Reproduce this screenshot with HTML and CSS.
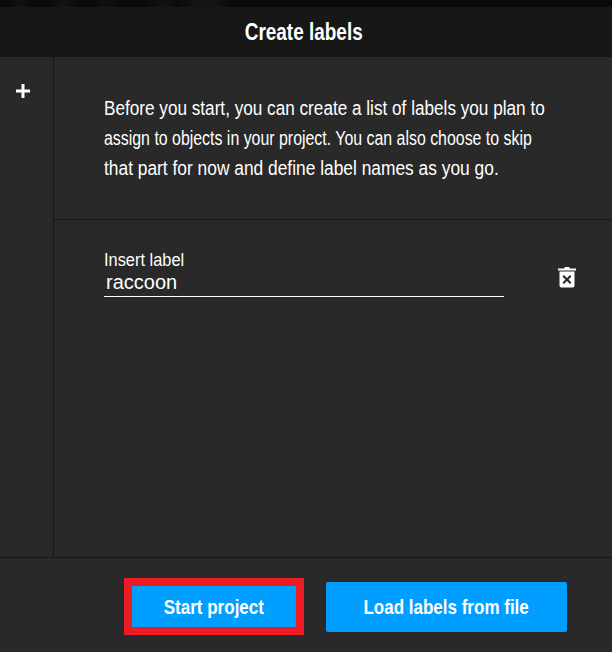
FILE: index.html
```html
<!DOCTYPE html>
<html lang="en">
<head>
<meta charset="utf-8">
<title>Create labels</title>
<link rel="stylesheet" href="styles.css">
</head>
<body>
<div class="app">
  <div class="backdrop"></div>
  <header class="title-bar"><h1 class="title">Create labels</h1></header>
  <div class="main">
    <aside class="sidebar">
      <svg class="plus" width="16" height="16" viewBox="0 0 16 16"><path d="M6.500 1h3v5.500h5.500v3h-5.500v5.500h-3v-5.500h-5.500v-3h5.500z" fill="#fff"/></svg>
    </aside>
    <div class="content">
      <section class="intro">
        <p class="intro-text"><span class="line line-1">Before you start, you can create a list of labels you plan to</span> <span class="line line-2">assign to objects in your project. You can also choose to skip</span> <span class="line line-3">that part for now and define label names as you go.</span></p>
      </section>
      <section class="labels">
        <div class="label-row">
          <div class="field">
            <label class="field-label">Insert label</label>
            <div class="field-value">raccoon</div>
          </div>
          <svg class="trash" width="18" height="22" viewBox="0 0 18 22"><path d="M0 2.500h6l1-1.500h4l1 1.500h6v2h-18z" fill="#fff"/><path fill-rule="evenodd" fill="#fff" d="M1.500 5.500h15v14a2 2 0 0 1-2 2h-11a2 2 0 0 1-2-2zM6 9l-1.500 1.500 3 3-3 3 1.500 1.500 3-3 3 3 1.500-1.500-3-3 3-3-1.500-1.500-3 3z"/></svg>
        </div>
      </section>
    </div>
  </div>
  <footer class="footer">
    <div class="highlight"><button class="btn btn-start"><span class="btn-text">Start project</span></button></div>
    <button class="btn btn-load"><span class="btn-text">Load labels from file</span></button>
  </footer>
</div>
</body>
</html>
```
FILE: styles.css
```css
* { box-sizing: border-box; }
html, body { margin: 0; padding: 0; }
body { background: #292929; color: #fff; font-family: "Liberation Sans", sans-serif; }
.app { width: 612px; height: 652px; display: flex; flex-direction: column; overflow: hidden; }
.backdrop { height: 7px; background: linear-gradient(90deg, #0a0a0a 4%, #121212 8%, #0b0b0b 12%, #0a0a0a 19%, #131313 24%, #0b0b0b 30%, #0a0a0a 35%, #111 41%, #0b0b0b 45%, #0a0a0a 56%, #131313 64%, #0b0b0b 68%, #131313 75%, #151515 82%, #0b0b0b 88%, #0a0a0a 91%) 0 0 / 260px 100% no-repeat #0a0a0a; }
.title-bar { height: 50px; background: #171717; display: flex; align-items: center; justify-content: center; padding-right: 5px; }
.title { margin: 0; font-size: 24px; font-weight: 700; line-height: 50px; transform: scaleX(.79); }
.main { height: 500px; display: flex; }
.sidebar { width: 54px; border-right: 1px solid #171717; display: flex; justify-content: center; padding-top: 26px; padding-right: 8px; }
.plus { display: block; }
.content { flex: 1; display: flex; flex-direction: column; min-width: 0; }
.intro { height: 163px; border-bottom: 1px solid #171717; padding: 36px 0 0 50px; overflow: hidden; }
.intro-text { margin: 0; font-size: 20px; line-height: 30px; }
.line { display: block; width: max-content; white-space: nowrap; transform-origin: left center; }
.line-1 { transform: scaleX(.858); }
.line-2 { transform: scaleX(.795); }
.line-3 { transform: scaleX(.868); }
.labels { padding: 30px 36px 0 50px; }
.label-row { display: flex; align-items: center; justify-content: space-between; }
.field { width: 400px; border-bottom: 1px solid #fff; height: 47px; }
.field-label { display: block; font-size: 18px; line-height: 20px; transform: scaleX(.91); transform-origin: left center; }
.field-value { font-size: 20px; line-height: 24px; padding-left: 2px; }
.trash { margin-top: 6px; }
.footer { flex: 1; border-top: 1px solid #171717; display: flex; align-items: flex-start; padding: 20px 45px 0 124px; gap: 22px; }
.highlight { border: 8px solid #ed1c24; height: 57px; width: 180px; }
.btn { border: 0; padding: 0; background: #009fff; color: #fff; font-family: inherit; font-size: 21px; font-weight: 700; }
.btn-text { display: inline-block; transform: scaleX(.81); white-space: nowrap; }
.btn-start { display: block; width: 100%; height: 100%; }
.btn-load { width: 241px; height: 50px; margin-top: 4px; border-radius: 2px; }
```
